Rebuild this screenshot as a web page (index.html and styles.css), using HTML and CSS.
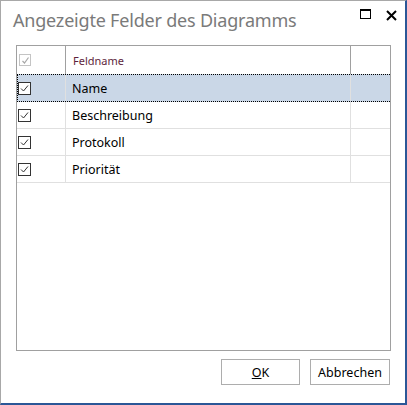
FILE: index.html
```html
<!DOCTYPE html>
<html lang="de">
<head>
    <meta charset="UTF-8">
    <title>Angezeigte Felder des Diagramms</title>
    <link rel="stylesheet" href="styles.css">
</head>
<body>
    <div class="window">
        <div class="titlebar">
            <span class="title">Angezeigte Felder des Diagramms</span>
            <div class="title-buttons">
                <svg class="tb-icon" width="11" height="11" viewBox="0 0 11 11">
                    <rect x="0.5" y="0.5" width="10" height="9" fill="none" stroke="#000"/>
                    <rect x="0" y="0" width="11" height="2" fill="#000"/>
                </svg>
                <svg class="tb-icon close" width="11" height="11" viewBox="0 0 11 11">
                    <path d="M1 1 L10 10 M10 1 L1 10" stroke="#000" stroke-width="2"/>
                </svg>
            </div>
        </div>

        <div class="grid">
            <div class="row header">
                <div class="cell check-col">
                    <span class="box disabled">
                        <svg width="9" height="9" viewBox="0 0 9 9"><path d="M1.5 5 L3.5 7 L7.5 1.5" fill="none" stroke="#a8a8a8" stroke-width="1.2"/></svg>
                    </span>
                </div>
                <div class="cell name-col head-text">Feldname</div>
                <div class="cell rest-col"></div>
            </div>
            <div class="row selected">
                <div class="cell check-col"><span class="box"><svg width="9" height="9" viewBox="0 0 9 9"><path d="M1 4.5 L3.5 7 L8 1.5" fill="none" stroke="#333" stroke-width="1"/></svg></span></div>
                <div class="cell name-col">Name</div>
                <div class="cell rest-col"></div>
            </div>
            <div class="row">
                <div class="cell check-col"><span class="box"><svg width="9" height="9" viewBox="0 0 9 9"><path d="M1 4.5 L3.5 7 L8 1.5" fill="none" stroke="#333" stroke-width="1"/></svg></span></div>
                <div class="cell name-col">Beschreibung</div>
                <div class="cell rest-col"></div>
            </div>
            <div class="row">
                <div class="cell check-col"><span class="box"><svg width="9" height="9" viewBox="0 0 9 9"><path d="M1 4.5 L3.5 7 L8 1.5" fill="none" stroke="#333" stroke-width="1"/></svg></span></div>
                <div class="cell name-col">Protokoll</div>
                <div class="cell rest-col"></div>
            </div>
            <div class="row">
                <div class="cell check-col"><span class="box"><svg width="9" height="9" viewBox="0 0 9 9"><path d="M1 4.5 L3.5 7 L8 1.5" fill="none" stroke="#333" stroke-width="1"/></svg></span></div>
                <div class="cell name-col">Priorität</div>
                <div class="cell rest-col"></div>
            </div>
        </div>

        <div class="footer">
            <button class="btn"><u>O</u>K</button>
            <button class="btn">Abbrechen</button>
        </div>
    </div>
</body>
</html>
```

FILE: styles.css
```css
body {
    margin: 0;
    font-family: "Noto Sans", "Open Sans", sans-serif;
    background: #fff;
}

.window {
    width: 407px;
    height: 405px;
    box-sizing: border-box;
    border-top: 1px solid #a8a8a8;
    border-left: 1px solid #a8a8a8;
    border-right: 2px solid #2b5797;
    border-bottom: 2px solid #2b5797;
    background: #fff;
    display: flex;
    flex-direction: column;
}

.titlebar {
    height: 44px;
    display: flex;
    align-items: flex-start;
    justify-content: space-between;
}

.title {
    margin: 7px 0 0 12px;
    font-size: 18px;
    color: #7a7a7a;
    letter-spacing: -0.2px;
}

.title-buttons {
    display: flex;
    gap: 15px;
    margin: 8px 8px 0 0;
}

.tb-icon.close {
    margin-top: 1px;
}

/* grid */
.grid {
    margin-left: 15px;
    width: 375px;
    height: 306px;
    box-sizing: border-box;
    border: 1px solid #a0a0a0;
}

.row {
    display: flex;
    height: 27px;
    box-sizing: border-box;
    border-bottom: 1px solid #e0e0e0;
    font-size: 12.5px;
    color: #000;
}

.row.header {
    height: 29px;
    border-bottom: 1px solid #a0a0a0;
}

.row.selected {
    background: #cad7e7;
    margin-top: -1px;
    height: 28px;
    border-top: 1px dotted #000;
    border-bottom: 1px dotted #000;
    border-left: 1px dotted #000;
}

.cell {
    display: flex;
    align-items: center;
    box-sizing: border-box;
}

.check-col {
    width: 49px;
    border-right: 1px solid #e0e0e0;
    padding-left: 1px;
}

.row.selected .check-col {
    width: 48px;
    padding-left: 0;
}

.name-col {
    width: 285px;
    border-right: 1px solid #e0e0e0;
    padding-left: 6px;
}

.rest-col {
    flex: 1;
}

.header .check-col,
.header .name-col {
    border-right-color: #a0a0a0;
}

.head-text {
    font-size: 11px;
    color: #5e1f3c;
    padding-left: 7px;
}

.box {
    width: 13px;
    height: 13px;
    box-sizing: border-box;
    border: 1px solid #333;
    background: #fff;
    display: flex;
    align-items: center;
    justify-content: center;
}

.box.disabled {
    border-color: #c4c4c4;
    margin-left: 1px;
    width: 12px;
    height: 12px;
}

.footer {
    display: flex;
    justify-content: flex-end;
    gap: 10px;
    margin: 8px 15px 0 0;
}

.btn {
    height: 26px;
    width: 79px;
    box-sizing: border-box;
    border: 1px solid #adadad;
    background: #fff;
    font-family: "Noto Sans", "Open Sans", sans-serif;
    font-size: 12.5px;
    color: #000;
    padding: 0;
}

.btn + .btn {
    width: 80px;
}
```
